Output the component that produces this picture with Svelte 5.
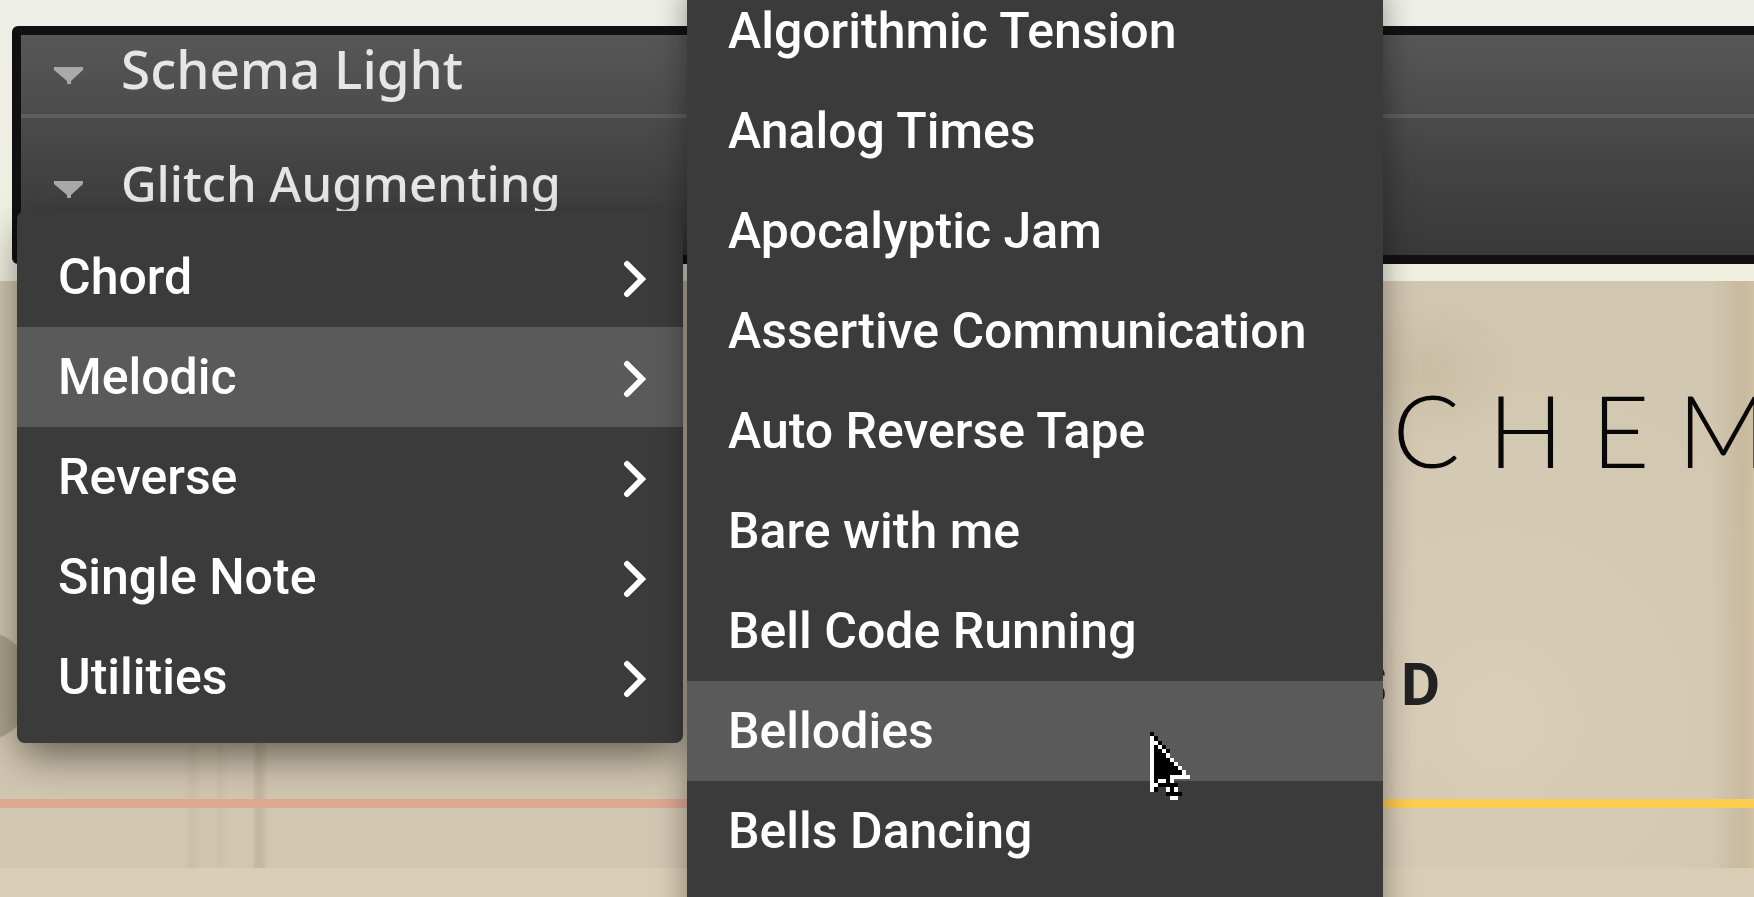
<script lang="ts">
	const presets = ['Schema Light', 'Glitch Augmenting']
	const categories = ['Chord', 'Melodic', 'Reverse', 'Single Note', 'Utilities']
	const snapshots = [
		'Algorithmic Tension',
		'Analog Times',
		'Apocalyptic Jam',
		'Assertive Communication',
		'Auto Reverse Tape',
		'Bare with me',
		'Bell Code Running',
		'Bellodies',
		'Bells Dancing'
	]

	// pixel rows of the pointer: o is white, # is black
	const pointer = [
		'#',
		'o#',
		'oo#',
		'o#o#',
		'o##o#',
		'o###o',
		'o####o',
		'o#####o',
		'o######o',
		'o#######o',
		'o####ooooo',
		'o#oo#o',
		'oo#####',
		'o#  o#o',
		'    ####',
		'     oo'
	]

	let category = $state('Melodic')
	let hovered = $state('Bellodies')
</script>

<main>
	<header>
		{#each presets as preset, i}
			<button class="preset" class:small={i > 0}>
				<svg viewBox="0 0 29 17" aria-hidden="true">
					<path d="M0 0H29V3L17 14V17H13V14L0 3Z" fill="#a9a9a9" />
				</svg>
				{preset}
			</button>
		{/each}
	</header>

	<section class="hero">
		<h1>SCHEMA</h1>
		<p>SSD</p>
		<div class="rule"></div>
	</section>

	<nav class="menu categories" aria-label="Categories">
		{#each categories as name}
			<button class:active={name === category} onmouseenter={() => (category = name)}>
				{name}
				<svg class="chevron" viewBox="0 0 24 38" aria-hidden="true">
					<path
						d="M4 4L19 19L4 34"
						fill="none"
						stroke="#fff"
						stroke-width="6"
						stroke-linecap="round"
					/>
				</svg>
			</button>
		{/each}
	</nav>

	<nav class="menu snapshots" aria-label="Snapshots">
		{#each snapshots as name}
			<button class:active={name === hovered} onmouseenter={() => (hovered = name)}>{name}</button>
		{/each}
	</nav>

	<svg
		class="cursor"
		viewBox="0 0 10 16"
		preserveAspectRatio="none"
		shape-rendering="crispEdges"
		aria-hidden="true"
	>
		{#each pointer as row, y}
			{#each row as cell, x}
				{#if cell !== ' '}
					<rect {x} {y} width="1" height="1" fill={cell === 'o' ? '#fff' : '#000'} />
				{/if}
			{/each}
		{/each}
	</svg>
</main>

<style>
	:global(body) {
		margin: 0;
		background: #d9ceb5;
	}

	main {
		position: relative;
		height: 100vh;
		overflow: hidden;
		background: linear-gradient(#eeefe8, #f0efe0 281px, #d9ceb5 281px);
		font-family: Roboto, sans-serif;
	}

	button {
		display: flex;
		align-items: center;
		width: 100%;
		border: 0;
		background: none;
		text-align: left;
		white-space: nowrap;
	}

	header {
		box-sizing: border-box;
		height: 238px;
		margin: 26px -20px 17px 12px;
		border: 9px solid #111;
		border-radius: 6px;
		background: linear-gradient(#575757, #4c4c4c 35%, #434344 60%, #39393a);
	}

	.preset {
		height: 83px;
		padding: 0 0 12px 33px;
		gap: 38px;
		border-bottom: 4px solid #5e5e5e;
		color: #e6e6e6;
		font: 500 53px 'Noto Sans', sans-serif;
	}

	.preset svg {
		width: 29px;
		height: 17px;
		margin-top: 14px;
	}

	.preset.small {
		height: 137px;
		padding-bottom: 8px;
		border-bottom: 0;
		font-size: 49px;
	}

	.hero {
		position: relative;
		height: 587px;
		overflow: hidden;
		background:
			radial-gradient(circle at -22px 405px, #8a806c80 0 55px, transparent 57px),
			radial-gradient(ellipse 90px 70px at 1430px 90px, #b9ab8a55, transparent),
			linear-gradient(
				90deg,
				transparent 184px,
				#b9a99233 190px 196px,
				transparent 202px 214px,
				#b9a99233 220px,
				transparent 228px 252px,
				#a8998255 256px 262px,
				transparent 268px
			),
			linear-gradient(90deg, transparent calc(100% - 44px), #b7a68566 calc(100% - 12px), #cfb58f66),
			radial-gradient(ellipse 400px 400px at 1500px 440px, #d8cdb7, transparent),
			#d1c6b0;
	}

	h1 {
		margin: 88px 0 0 1311px;
		color: #080808;
		font: 300 100px/120px Lato, sans-serif;
		letter-spacing: 28px;
		white-space: nowrap;
	}

	p {
		margin: 161px 0 0 1299px;
		color: #222;
		font: 700 60px/70px Roboto, sans-serif;
		letter-spacing: 14px;
	}

	.rule {
		height: 9px;
		margin-top: 79px;
		background: linear-gradient(90deg, #dda993 60%, #fdcd50 60%);
	}

	.menu {
		position: absolute;
		background: #3b3b3b;
	}

	.menu button {
		height: 100px;
		padding: 0 36px 0 41px;
		justify-content: space-between;
		color: #fff;
		font: 500 50px/56px Roboto, sans-serif;
	}

	.menu .active {
		background: #5a5a5a;
	}

	.categories {
		top: 211px;
		left: 17px;
		width: 666px;
		padding: 16px 0;
		border-radius: 8px;
		box-shadow: 0 16px 40px -4px #0008;
	}

	.snapshots {
		top: -19px;
		left: 687px;
		width: 696px;
		padding-bottom: 60px;
		box-shadow: 0 10px 30px #0006;
	}

	.chevron {
		width: 24px;
		height: 38px;
		margin-top: 3px;
	}

	.cursor {
		position: absolute;
		top: 732px;
		left: 1150px;
		width: 40px;
		height: 68px;
	}
</style>
